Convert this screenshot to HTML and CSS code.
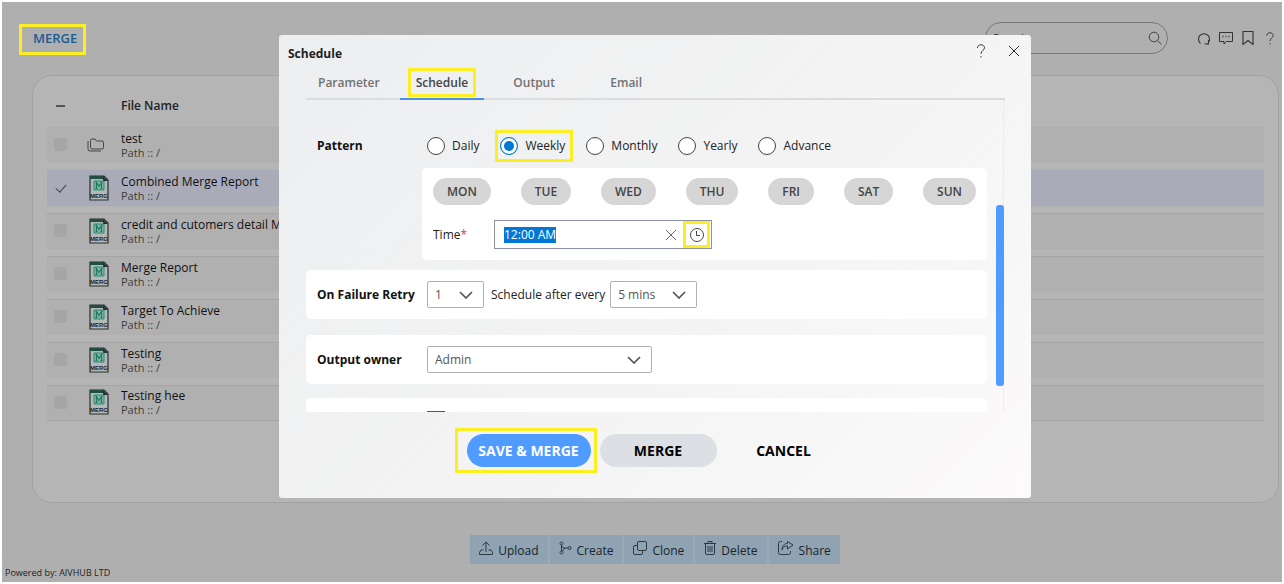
FILE: index.html
```html
<!DOCTYPE html>
<html lang="en">
<head>
<meta charset="utf-8">
<meta name="viewport" content="width=device-width, initial-scale=1">
<title>Merge - Schedule</title>
<link rel="stylesheet" href="styles.css">
</head>
<body>
<svg class="defs" aria-hidden="true">
  <symbol id="merge-file" viewBox="0 0 20 26">
    <path d="M1 1h14l4 4v20H1z" fill="#b4b9b8" stroke="#26312f" stroke-width="1.200"/>
    <path d="M1 1h14v3H1z" fill="#1f4d43"/>
    <path d="M14 1l5 5h-5z" fill="#26312f"/>
    <path d="M5 6h10v9H5z" fill="#7fb3a4" stroke="#2f8a70"/>
    <path d="M6.500 13.500h2m3 0h2M7.500 13.500v-6l2.500 4 2.500-4v6M6.500 7.500h1m5 0h1" fill="none" stroke="#1d7a61" stroke-width="1.100"/>
    <text x="10" y="22.500" text-anchor="middle" class="file-tag">MERG</text>
  </symbol>
  <symbol id="chevron" viewBox="0 0 14 8"><path d="M1 1l6 6 6-6" fill="none" stroke="#555" stroke-width="1.700"/></symbol>
  <symbol id="cross" viewBox="0 0 12 12"><path d="M1 1l10 10M11 1L1 11" fill="none" stroke="currentColor"/></symbol>
  <symbol id="question" viewBox="0 0 10 14"><path d="M1.500 4C1.500 1.800 3 .8 5 .8s3.500 1.200 3.500 3c0 2.600-3.500 2.600-3.500 6M5 12v1.400" fill="none" stroke="currentColor"/></symbol>
</svg>

<div class="page">
  <header class="topbar">
    <h1 class="page-title mark">MERGE</h1>
    <div class="search">
      <input class="search-input" type="text" placeholder="Search" aria-label="Search">
      <svg width="14" height="14" viewBox="0 0 14 14" fill="none" stroke="#444"><circle cx="6" cy="6" r="4.800"/><path d="M9.500 9.500l4 4"/></svg>
    </div>
    <nav class="top-icons" aria-label="Tools">
      <button class="icon-btn" aria-label="Refresh"><svg width="14" height="14" viewBox="0 0 14 14" fill="none" stroke="#333" stroke-width="1.100"><path d="M3.500 12.500A5.500 5.500 0 1 1 10.500 12.500M11.500 9v4h-4"/></svg></button>
      <button class="icon-btn" aria-label="Comments"><svg width="14" height="14" viewBox="0 0 14 14" fill="none" stroke="#333"><path d="M.5 1.500h13v9H7.500L5 13v-2.500H.5z"/><path d="M3.500 5.500h1m2 0h1m2 0h1" stroke-width="1.500"/></svg></button>
      <button class="icon-btn" aria-label="Bookmarks"><svg width="14" height="14" viewBox="0 0 14 14" fill="none" stroke="#333" stroke-width="1.100"><path d="M2 .5h10v13L7 9.500l-5 4z"/></svg></button>
      <button class="icon-btn" aria-label="Help"><svg width="10" height="13"><use href="#question"/></svg></button>
    </nav>
  </header>

  <main class="panel">
    <table class="files">
      <thead>
        <tr><th class="col-check"><span class="dash"></span></th><th class="col-icon"></th><th>File Name</th></tr>
      </thead>
      <tbody>
        <tr>
          <td class="col-check"><input type="checkbox" class="tick" aria-label="test"></td>
          <td class="col-icon"><svg width="18" height="14" viewBox="0 0 18 14" fill="none" stroke="#444"><path d="M3.500 2.500a1.500 1.500 0 0 1 1.500-1.500h3l1.500 2h5.500a1.500 1.500 0 0 1 1.500 1.500v5a1.500 1.500 0 0 1-1.500 1.500H5a1.500 1.500 0 0 1-1.500-1.500zM1 3v8a2 2 0 0 0 2 2h11"/></svg></td>
          <td><div class="name">test</div><div class="path">Path :: /</div></td>
        </tr>
        <tr class="selected">
          <td class="col-check"><input type="checkbox" class="tick" checked aria-label="Combined Merge Report"></td>
          <td class="col-icon"><svg width="20" height="26"><use href="#merge-file"/></svg></td>
          <td><div class="name">Combined Merge Report</div><div class="path">Path :: /</div></td>
        </tr>
        <tr>
          <td class="col-check"><input type="checkbox" class="tick" aria-label="credit and cutomers detail Merge"></td>
          <td class="col-icon"><svg width="20" height="26"><use href="#merge-file"/></svg></td>
          <td><div class="name">credit and cutomers detail Merge</div><div class="path">Path :: /</div></td>
        </tr>
        <tr>
          <td class="col-check"><input type="checkbox" class="tick" aria-label="Merge Report"></td>
          <td class="col-icon"><svg width="20" height="26"><use href="#merge-file"/></svg></td>
          <td><div class="name">Merge Report</div><div class="path">Path :: /</div></td>
        </tr>
        <tr>
          <td class="col-check"><input type="checkbox" class="tick" aria-label="Target To Achieve"></td>
          <td class="col-icon"><svg width="20" height="26"><use href="#merge-file"/></svg></td>
          <td><div class="name">Target To Achieve</div><div class="path">Path :: /</div></td>
        </tr>
        <tr>
          <td class="col-check"><input type="checkbox" class="tick" aria-label="Testing"></td>
          <td class="col-icon"><svg width="20" height="26"><use href="#merge-file"/></svg></td>
          <td><div class="name">Testing</div><div class="path">Path :: /</div></td>
        </tr>
        <tr>
          <td class="col-check"><input type="checkbox" class="tick" aria-label="Testing hee"></td>
          <td class="col-icon"><svg width="20" height="26"><use href="#merge-file"/></svg></td>
          <td><div class="name">Testing hee</div><div class="path">Path :: /</div></td>
        </tr>
      </tbody>
    </table>
  </main>

  <div class="actions">
    <button class="action"><svg width="14" height="15" viewBox="0 0 14 15" fill="none" stroke="#2d3a44"><path d="M7 11V1M3.500 4.500L7 1l3.500 3.500M4.500 9H2L.5 11.500v2h13v-2L12 9H9.500"/></svg>Upload</button>
    <button class="action"><svg width="13" height="14" viewBox="0 0 13 14" fill="none" stroke="#2d3a44"><circle cx="2.500" cy="2.500" r="1.500"/><circle cx="2.500" cy="11.500" r="1.500"/><circle cx="10.500" cy="7" r="1.500"/><path d="M2.500 4v6M2.500 4.500C3 7 5 7 9 7M3.500 10L6 7"/></svg>Create</button>
    <button class="action"><svg width="14" height="14" viewBox="0 0 14 14" fill="none" stroke="#2d3a44"><rect x="4.500" y=".5" width="9" height="9" rx="1.500"/><path d="M4.500 4.500H2A1.500 1.500 0 0 0 .5 6v6A1.500 1.500 0 0 0 2 13.500h6A1.500 1.500 0 0 0 9.500 12V9.500"/></svg>Clone</button>
    <button class="action"><svg width="12" height="14" viewBox="0 0 12 14" fill="none" stroke="#2d3a44"><path d="M0 2.500h12M4 2.500v-2h4v2M1.500 2.500v9.500a1.500 1.500 0 0 0 1.500 1.500h6a1.500 1.500 0 0 0 1.500-1.500V2.500M4 5v6M6 5v6M8 5v6"/></svg>Delete</button>
    <button class="action"><svg width="16" height="14" viewBox="0 0 16 14" fill="none" stroke="#2d3a44"><path d="M4 .5H2.500a2 2 0 0 0-2 2v9a2 2 0 0 0 2 2h8a2 2 0 0 0 2-2V10M4 9c.5-3 2.500-4 5.500-4V8L15 4 9.500.5v2C6 2.500 4 5 4 9z"/></svg>Share</button>
  </div>
  <footer class="powered">Powered by: AIVHUB LTD</footer>
</div>

<div class="overlay">
  <section class="dialog" role="dialog" aria-labelledby="dialog-title">
    <header class="dialog-head">
      <h2 class="dialog-title" id="dialog-title">Schedule</h2>
      <button class="icon-btn" aria-label="Help"><svg width="10" height="14"><use href="#question"/></svg></button>
      <button class="icon-btn" aria-label="Close"><svg width="12" height="12"><use href="#cross"/></svg></button>
    </header>
    <nav class="tabs" role="tablist">
      <button class="tab" role="tab">Parameter</button>
      <button class="tab active" role="tab" aria-selected="true"><span class="mark">Schedule</span></button>
      <button class="tab" role="tab">Output</button>
      <button class="tab" role="tab">Email</button>
    </nav>

    <div class="scroll">
      <form class="form">
        <div class="pattern">
          <div class="row">
            <span class="label">Pattern</span>
            <div class="radios">
              <label class="radio"><input type="radio" name="pattern">Daily</label>
              <label class="radio mark"><input type="radio" name="pattern" checked>Weekly</label>
              <label class="radio"><input type="radio" name="pattern">Monthly</label>
              <label class="radio"><input type="radio" name="pattern">Yearly</label>
              <label class="radio"><input type="radio" name="pattern">Advance</label>
            </div>
          </div>
          <div class="weekly">
            <div class="days">
              <button type="button" class="day">MON</button>
              <button type="button" class="day">TUE</button>
              <button type="button" class="day">WED</button>
              <button type="button" class="day">THU</button>
              <button type="button" class="day">FRI</button>
              <button type="button" class="day">SAT</button>
              <button type="button" class="day">SUN</button>
            </div>
            <div class="time">
              <label for="time">Time<span class="required">*</span></label>
              <div class="time-box">
                <input id="time" class="time-input" type="text" value="12:00 AM">
                <button type="button" class="icon-btn" aria-label="Clear"><svg width="12" height="12"><use href="#cross"/></svg></button>
                <button type="button" class="icon-btn clock mark" aria-label="Pick a time"><svg width="16" height="16" viewBox="0 0 16 16" fill="none" stroke="#444"><circle cx="8" cy="8" r="6.500"/><path d="M7.500 4v4.500H11"/></svg></button>
              </div>
            </div>
          </div>
        </div>

        <div class="box row">
          <label class="label" for="retry">On Failure Retry</label>
          <span class="select retry"><select id="retry"><option>1</option></select><svg width="14" height="8"><use href="#chevron"/></svg></span>
          <label for="every">Schedule after every</label>
          <span class="select every"><select id="every"><option>5 mins</option></select><svg width="14" height="8"><use href="#chevron"/></svg></span>
        </div>
        <div class="box row">
          <label class="label" for="owner">Output owner</label>
          <span class="select owner"><select id="owner"><option>Admin</option></select><svg width="14" height="8"><use href="#chevron"/></svg></span>
        </div>
        <div class="box row">
          <span class="label"></span>
          <input type="checkbox" class="option" aria-label="Option">
        </div>
      </form>
      <div class="track"><div class="thumb"></div></div>
    </div>

    <footer class="dialog-foot">
      <div class="mark save"><button class="btn primary">SAVE &amp; MERGE</button></div>
      <button class="btn secondary">MERGE</button>
      <button class="btn plain">CANCEL</button>
    </footer>
  </section>
</div>
<script src="script.js"></script>
</body>
</html>
```

FILE: styles.css
```css
* { box-sizing: border-box; }

body {
  margin: 2px;
  background: #fff;
  color: #222;
  font: 12px/16px "Open Sans", "Noto Sans", sans-serif;
}

button, input, select { font: inherit; color: inherit; margin: 0; }
h1, h2 { margin: 0; }
svg { display: block; flex: none; }
.defs { display: none; }
.file-tag { font: bold 6px "Liberation Sans", sans-serif; fill: #222; }

.mark { outline: 3px solid #fbee23; }

.icon-btn {
  display: flex;
  align-items: center;
  justify-content: center;
  padding: 0;
  border: 0;
  background: none;
  color: #333;
}

/* Page behind the dialog */
.page {
  display: flex;
  flex-direction: column;
  min-height: calc(100vh - 4px);
  background: #afafaf;
}

.topbar {
  display: flex;
  align-items: center;
  padding: 20px 5px 0 20px;
}

.page-title {
  padding: 2px 6px 5px 11px;
  margin-top: 2px;
  font-size: 13px;
  font-weight: 600;
  line-height: 18px;
  color: #1c5c95;
}

.search {
  display: flex;
  align-items: center;
  width: 183px;
  height: 32px;
  margin-left: auto;
  padding: 0 5px 0 7px;
  border: 1px solid #777;
  border-radius: 16px;
}
.search-input {
  flex: 1;
  min-width: 0;
  padding: 0;
  border: 0;
  background: none;
  font-size: 11px;
}
.search-input::placeholder { color: #222; opacity: 1; }

.top-icons {
  display: flex;
  align-items: center;
  gap: 8px;
  margin-left: 29px;
}
.top-icons .icon-btn { width: 14px; }

.panel {
  flex: 1;
  margin: 21px 3px 0 30px;
  padding: 15px 14px 0;
  border: 1px solid #a2a2a2;
  border-radius: 20px;
  background: #b5b5b5;
}

.files {
  width: 100%;
  border-collapse: separate;
  border-spacing: 0 7px;
  margin-top: -7px;
}
.files th {
  height: 29px;
  padding: 0;
  font-size: 12px;
  font-weight: 600;
  text-align: left;
}
.files td {
  height: 36px;
  padding: 0 0 2px;
  border-top: 1px solid #a4a4a4;
  background: #b0b0b0;
}
.files tbody tr:first-child td, .files .selected td { border-top-color: transparent; }
.files .selected td { background: #a9acb8; }
.files tr:last-child td { border-bottom: 1px solid #a4a4a4; }
.col-check { width: 40px; }
.files .col-check { padding-left: 7px; }
.files thead .col-check { padding-left: 9px; }
.col-icon { width: 34px; }
.files .col-icon svg { margin-left: 2px; }
.files tbody tr:first-child .col-icon svg { margin-left: 0; }
.dash { display: block; width: 9px; height: 2px; background: #555; }
.name { font-size: 12px; line-height: 15px; color: #111; }
.path { font-size: 11px; line-height: 13px; color: #3c3c3c; }

.tick {
  display: block;
  appearance: none;
  width: 13px;
  height: 13px;
  border-radius: 2px;
  background: #a6a6a6;
}
.tick:checked { background: none; }
.tick:checked::before {
  content: "";
  display: block;
  width: 9px;
  height: 5px;
  margin: 3px 2px;
  border: solid #444;
  border-width: 0 0 1px 1px;
  transform: rotate(-48deg);
}

.actions {
  display: flex;
  gap: 2px;
  align-self: center;
  margin: 32px 0 0 26px;
  background: #9daab3;
}
.action {
  display: flex;
  align-items: center;
  gap: 5px;
  height: 29px;
  padding: 2px 9px 0;
  border: 0;
  background: #8fa3b2;
  color: #1b232a;
}
.action svg { margin-bottom: 5px; }

.powered {
  padding: 1px 3px;
  font-size: 9px;
  line-height: 16px;
  color: #222;
}

/* Dialog */
.overlay {
  position: fixed;
  inset: 0;
  display: flex;
  align-items: flex-start;
  justify-content: center;
  padding: 35px 0 0 26px;
}

.dialog {
  width: min(752px, 100%);
  border-radius: 3px;
  background: linear-gradient(135deg, #eceef0, #f3f3f3 50%, #fcfafb);
}

.dialog-head {
  display: flex;
  align-items: flex-start;
  gap: 22px;
  padding: 9px 11px 0 9px;
}
.dialog-title {
  flex: 1;
  font-size: 12px;
  font-weight: 700;
  line-height: 20px;
}
.dialog-head .icon-btn { height: 14px; }

.tabs {
  display: flex;
  gap: 8px;
  margin: 1px 26px 0 27px;
  border-bottom: 2px solid #dcdcde;
}
.tab {
  min-width: 84px;
  height: 35px;
  margin-bottom: -2px;
  padding: 2px 12px 0;
  border: 0;
  border-bottom: 2px solid transparent;
  background: none;
  color: #717171;
  font-weight: 600;
}
.tab.active { padding: 2px 11px 0; border-bottom-color: #4c8fe8; color: #444; }
.tab .mark { padding: 3px 5px; }

.scroll {
  display: flex;
  justify-content: space-between;
  height: 312px;
  margin: 0 26px 0 27px;
  overflow: hidden;
}
.form { flex: 1; }

.row {
  display: flex;
  align-items: center;
}
.label {
  flex: none;
  width: 110px;
  font-weight: 700;
  color: #111;
}

.pattern { padding: 30px 0 10px 11px; }
.radios { display: flex; gap: 21px; }
.radio {
  display: flex;
  align-items: center;
  gap: 7px;
  height: 32px;
}
.radio.mark {
  outline-offset: -3px;
  padding: 0 8px 0 5px;
  margin: 0 -8px 0 -5px;
}
.radio input {
  appearance: none;
  width: 18px;
  height: 18px;
  border: 1px solid #444;
  border-radius: 50%;
  background: #fff;
}
.radio input:checked {
  border: 1px solid #0078d7;
  background: #0078d7;
  box-shadow: inset 0 0 0 3px #fff;
}

.weekly {
  margin: 6px 0 0 105px;
  padding: 10px 11px 11px 11px;
  border-radius: 5px;
  background: #fff;
}
.days { display: flex; justify-content: space-between; }
.day {
  height: 27px;
  padding: 0 14px;
  border: 0;
  border-radius: 14px;
  background: #d6d6d6;
  color: #444;
  font-weight: 600;
}

.time {
  display: grid;
  grid-template-columns: 61px 218px;
  align-items: center;
  margin-top: 15px;
}
.required { color: #e33; }
.time-box {
  display: flex;
  height: 29px;
  border: 1px solid #8c90a4;
}
.time-input {
  flex: 1;
  min-width: 0;
  padding: 0 9px;
  border: 0;
  outline: 0;
  background: none;
}
.time-input::selection { background: #0078d7; color: #fff; }
.time-box .icon-btn { color: #666; }
.clock {
  width: 27px;
  margin: 0 1px 0 6px;
  outline-offset: -3px;
}

.box {
  height: 49px;
  margin-bottom: 16px;
  padding: 0 11px;
  border-radius: 5px;
  background: #fff;
}
.box:last-child { margin-top: -2px; }
.select {
  display: grid;
  align-items: center;
  height: 27px;
  border: 1px solid #b0b0b0;
  border-radius: 2px;
  background: #fff;
}
.select > * { grid-area: 1 / 1; }
.select select {
  appearance: none;
  width: 100%;
  height: 100%;
  padding: 0 7px;
  border: 0;
  background: none;
  color: #555;
}
.select svg {
  justify-self: end;
  margin-right: 10px;
  pointer-events: none;
}
.retry { width: 57px; margin-right: 7px; }
.every { width: 87px; margin-left: 5px; }
.owner { width: 225px; }
.option {
  appearance: none;
  width: 18px;
  height: 24px;
  border: 1px solid #555;
}

.track {
  width: 8px;
  margin: 0 1px 0 9px;
  border-right: 1px solid #ececee;
}
.thumb {
  width: 8px;
  height: 181px;
  margin-top: 105px;
  border-radius: 3px;
  background: #4f9bff;
}

.dialog-foot {
  display: flex;
  align-items: center;
  justify-content: center;
  padding: 16px 5px 25px 0;
}
.save {
  padding: 6px 6px 6px 12px;
  margin-right: 3px;
  outline-offset: -3px;
}
.btn {
  height: 33px;
  border: 0;
  border-radius: 17px;
  color: #000;
  font-size: 14px;
  font-weight: 700;
}
.btn.primary { display: block; min-width: 124px; padding: 0 9px; background: #4f9bff; color: #fff; }
.btn.secondary { width: 117px; background: #dce0e4; }
.btn.plain { width: 134px; background: none; }
```

FILE: script.js
```js
const time = document.getElementById("time");
time.focus();
time.select();
```
